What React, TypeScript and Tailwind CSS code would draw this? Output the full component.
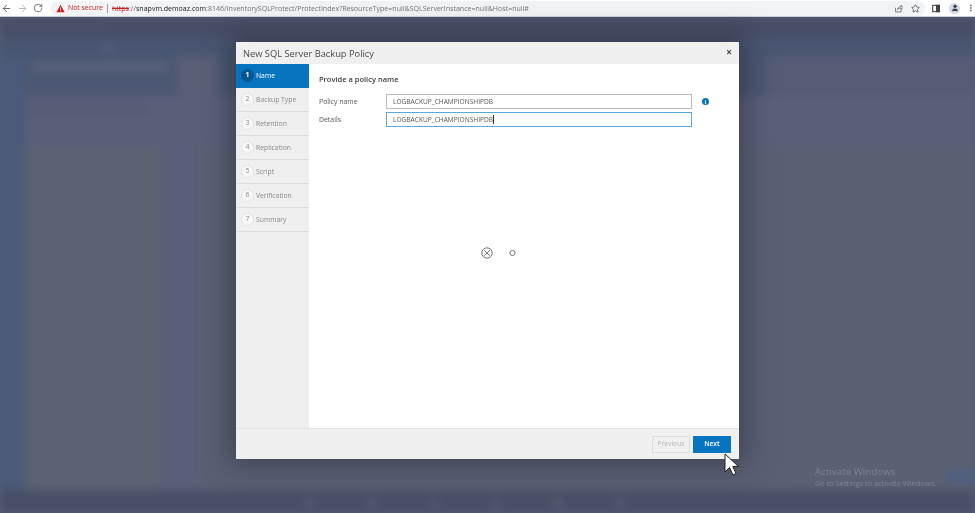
import { ArrowLeft, ArrowRight, RotateCw, Star, MoreVertical, User } from "lucide-react";

const steps = ["Name", "Backup Type", "Retention", "Replication", "Script", "Verification", "Summary"];
const taskbarSpots = ["bg-[#555b72]", "bg-[#555b72]", "bg-[#565874]", "bg-[#5a5872]", "bg-[#556070]", "bg-[#555b72]"];

const ChromeBar = () => (
  <div className="h-[17px] shrink-0 bg-white flex items-center border-b border-[#c9ccd6] font-['Open_Sans',sans-serif] blur-[0.35px]">
    <div className="w-[50px] flex items-center pl-[1px] gap-[5px] text-[#5f6368]">
      <ArrowLeft size={11} />
      <ArrowRight size={11} className="text-[#b5b7ba]" />
      <RotateCw size={10} />
    </div>
    <div className="w-[195px] flex-1 h-[15px] rounded-full bg-[#f1f3f4] flex items-center pl-[6px] text-[7.05px] whitespace-nowrap overflow-hidden">
      <svg width="9" height="9" viewBox="0 0 24 24" className="shrink-0">
        <path d="M12 2 L23 22 H1 Z" fill="#c5221f" />
        <rect x="11" y="9" width="2" height="7" fill="#fff" />
        <rect x="11" y="17.5" width="2" height="2" fill="#fff" />
      </svg>
      <span className="text-[#c5221f] ml-[3px] text-[6.9px]">Not secure</span>
      <span className="w-px h-[9px] bg-[#9aa0a6] mx-[4px]" />
      <span className="text-[#c5221f] line-through">https</span>
      <span className="text-[#70757a]">://</span>
      <span className="text-[#202124]">snapvm.demoaz.com</span>
      <span className="text-[#70757a]">:8146/InventorySQLProtect/ProtectIndex?ResourceType=null&amp;SQLServerInstance=null&amp;Host=null#</span>
      <div className="flex-1" />
      <svg width="9" height="9" viewBox="0 0 24 24" fill="none" stroke="#5f6368" strokeWidth="2" className="mr-[8px]">
        <path d="M4 10v11h15v-6M9 15c1-5 5-8 10-8V3l5 6-5 6v-4c-4 0-7 1-10 4z" />
      </svg>
      <Star size={9} className="text-[#5f6368] mr-[5px]" strokeWidth={2.5} />
    </div>
    <div className="w-[50px] shrink-0 flex items-center pl-[7px] text-[#5f6368]">
      <svg width="9" height="9" viewBox="0 0 24 24" fill="none" stroke="#3c4043" strokeWidth="3">
        <rect x="2" y="3" width="20" height="18" />
        <rect x="13" y="3" width="9" height="18" fill="#3c4043" />
      </svg>
      <div className="ml-[9px] w-[11px] h-[11px] rounded-full bg-[#d3d9ea] flex items-center justify-center">
        <User size={8} className="text-[#3c4043]" fill="#3c4043" />
      </div>
      <MoreVertical size={10} className="ml-[6px]" strokeWidth={2.5} />
    </div>
  </div>
);

// what shows through behind the dialog, very blurred
const Backdrop = () => (
  <div className="flex-1 flex flex-col overflow-hidden bg-[#575c75]">
    <div className="flex-1 flex flex-col blur-[4px]">
      <div className="h-[21px] shrink-0 bg-[#484e67] flex items-center pl-[6px]">
        <div className="w-[100px] h-[4px] bg-[#4e546c]" />
      </div>
      <div className="h-[18px] shrink-0 bg-[#485672] flex items-center pl-[105px]">
        <div className="w-[9px] h-[9px] rounded-full bg-[#59627c]" />
      </div>
      <div className="flex-1 flex">
        <div className="w-[25px] shrink-0 bg-[#4a5a78]" />
        <div className="flex-1 flex flex-col bg-[#5a5f7a]">
          <div className="h-[40px] shrink-0 flex">
            <div className="w-[153px] bg-[#4c5873] pt-[6px] pl-[8px]">
              <div className="w-[135px] h-[9px] bg-[#59607a]" />
            </div>
            <div className="w-[40px] bg-[#5b5f78]" />
            <div className="w-[20px] bg-[#4b5873]" />
            <div className="w-[530px] bg-[#4c5673]" />
            <div className="flex-1 bg-[#565c76]" />
          </div>
          <div className="h-[50px] shrink-0 flex">
            <div className="w-[133px] pt-[10px]">
              <div className="w-[125px] h-[8px] bg-[#565c74]" />
            </div>
            <div className="flex-1" />
          </div>
          <div className="flex-1 flex">
            <div className="w-[135px] bg-[#5b6373]" />
            <div className="w-[35px] bg-[#5b5e7a]" />
            <div className="w-[600px] bg-[#5a6074]" />
            <div className="flex-1 bg-[#5a6173]" />
          </div>
        </div>
      </div>
      <div className="h-[23px] shrink-0 bg-[#484f68] flex items-center pl-[305px] gap-[52px]">
        {taskbarSpots.map((c, i) => (
          <div key={i} className={"w-[10px] h-[10px] rounded-full " + c} />
        ))}
      </div>
    </div>
  </div>
);

const Dialog = () => (
  <div className="absolute left-[236px] top-[42px] w-[503px] h-[417px] bg-white flex flex-col shadow-[0_0_24px_6px_rgba(35,38,50,0.5)] font-['Open_Sans',sans-serif] blur-[0.45px]">
    <div className="h-[22px] shrink-0 bg-[#f0f0f0] flex justify-between pl-[7px] pr-[7px]">
      <span className="text-[9.3px] leading-[12px] pt-[6px] text-[#4a4a4a]">New SQL Server Backup Policy</span>
      <span className="text-[10px] font-bold leading-none pt-[5px] text-[#444]">×</span>
    </div>
    <div className="flex-1 flex min-h-0">
      <div className="w-[73px] shrink-0 bg-[#efefef]">
        {steps.map((s, i) => (
          <div
            key={s}
            className={
              "h-[24px] flex items-center pl-[5px] text-[6.8px] border-b " +
              (i === 0 ? "bg-[#0674bf] text-white border-[#0674bf]" : "text-[#8a8a8a] border-[#dcdcdc]")
            }
          >
            <span
              className={
                "w-[13px] h-[13px] rounded-full flex items-center justify-center mr-[2px] " +
                (i === 0 ? "bg-[#04568f] text-white font-bold" : "bg-[#f7f7f7] border border-[#e2e2e2] text-[#8a8a8a]")
              }
            >
              {i + 1}
            </span>
            <span className="pt-[2px]">{s}</span>
          </div>
        ))}
      </div>
      <div className="flex-1 relative pl-[10px] pt-[9px]">
        <div className="text-[7.5px] font-semibold text-[#3f3f3f] leading-[12px]">Provide a policy name</div>
        <div className="mt-[9px] flex items-center h-[15px]">
          <span className="w-[67px] pt-[1px] text-[6.9px] text-[#555]">Policy name</span>
          <div className="w-[306px] h-[15px] border border-[#bdbdbd] flex items-center pl-[6px] text-[6.6px] text-[#555]">
            LOGBACKUP_CHAMPIONSHIPDB
          </div>
          <div className="ml-[10px] w-[7px] h-[7px] rounded-full bg-[#0674bf] flex items-center justify-center text-white text-[6px] font-bold leading-none">
            i
          </div>
        </div>
        <div className="mt-[3px] flex items-center h-[15px]">
          <span className="w-[67px] pt-[1px] text-[6.9px] text-[#555]">Details</span>
          <div className="w-[306px] h-[15px] border border-[#5aa9de] flex items-center pl-[6px] text-[6.6px] text-[#555]">
            LOGBACKUP_CHAMPIONSHIPDB
            <span className="w-px h-[9px] bg-[#333]" />
          </div>
        </div>
        <svg className="absolute left-[171px] top-[182px]" width="40" height="14" viewBox="0 0 40 14" fill="none" stroke="#777">
          <circle cx="7" cy="7" r="5.2" />
          <path d="M4.2 4.2 L9.8 9.8 M9.8 4.2 L4.2 9.8" />
          <circle cx="32.5" cy="7" r="2.6" />
        </svg>
      </div>
    </div>
    <div className="h-[31px] shrink-0 bg-[#f0f0f0] border-t border-[#e2e2e2] flex items-center justify-end gap-[3px] pr-[8px] text-[6.7px]">
      <div className="w-[38px] h-[17px] border border-[#dcdcdc] flex items-center justify-center text-[#b5b5b5]">Previous</div>
      <div className="w-[38px] h-[17px] bg-[#0674bf] flex items-center justify-center text-white font-semibold">Next</div>
    </div>
  </div>
);

export default function App() {
  return (
    <div className="relative w-[975px] h-[513px] overflow-hidden flex flex-col">
      <ChromeBar />
      <Backdrop />
      <Dialog />
      <svg className="absolute left-[723px] top-[452px]" width="17" height="25" viewBox="0 0 17 25">
        <path d="M2 2 V20 L6.5 15.5 L10 23 L13 21.5 L9.8 14.5 H15.5 Z" fill="#fff" stroke="#222" strokeWidth="1" />
      </svg>
      <div className="absolute left-[947px] top-[469px] w-[28px] h-[15px] bg-[#515f80] blur-[2px]" />
      <div className="absolute left-[815px] top-[465px] font-['Open_Sans',sans-serif] text-[#7d8499] blur-[0.3px]">
        <div className="text-[9.8px] leading-[13px]">Activate Windows</div>
        <div className="text-[7.4px] leading-[11px] whitespace-nowrap">Go to Settings to activate Windows.</div>
      </div>
    </div>
  );
}
